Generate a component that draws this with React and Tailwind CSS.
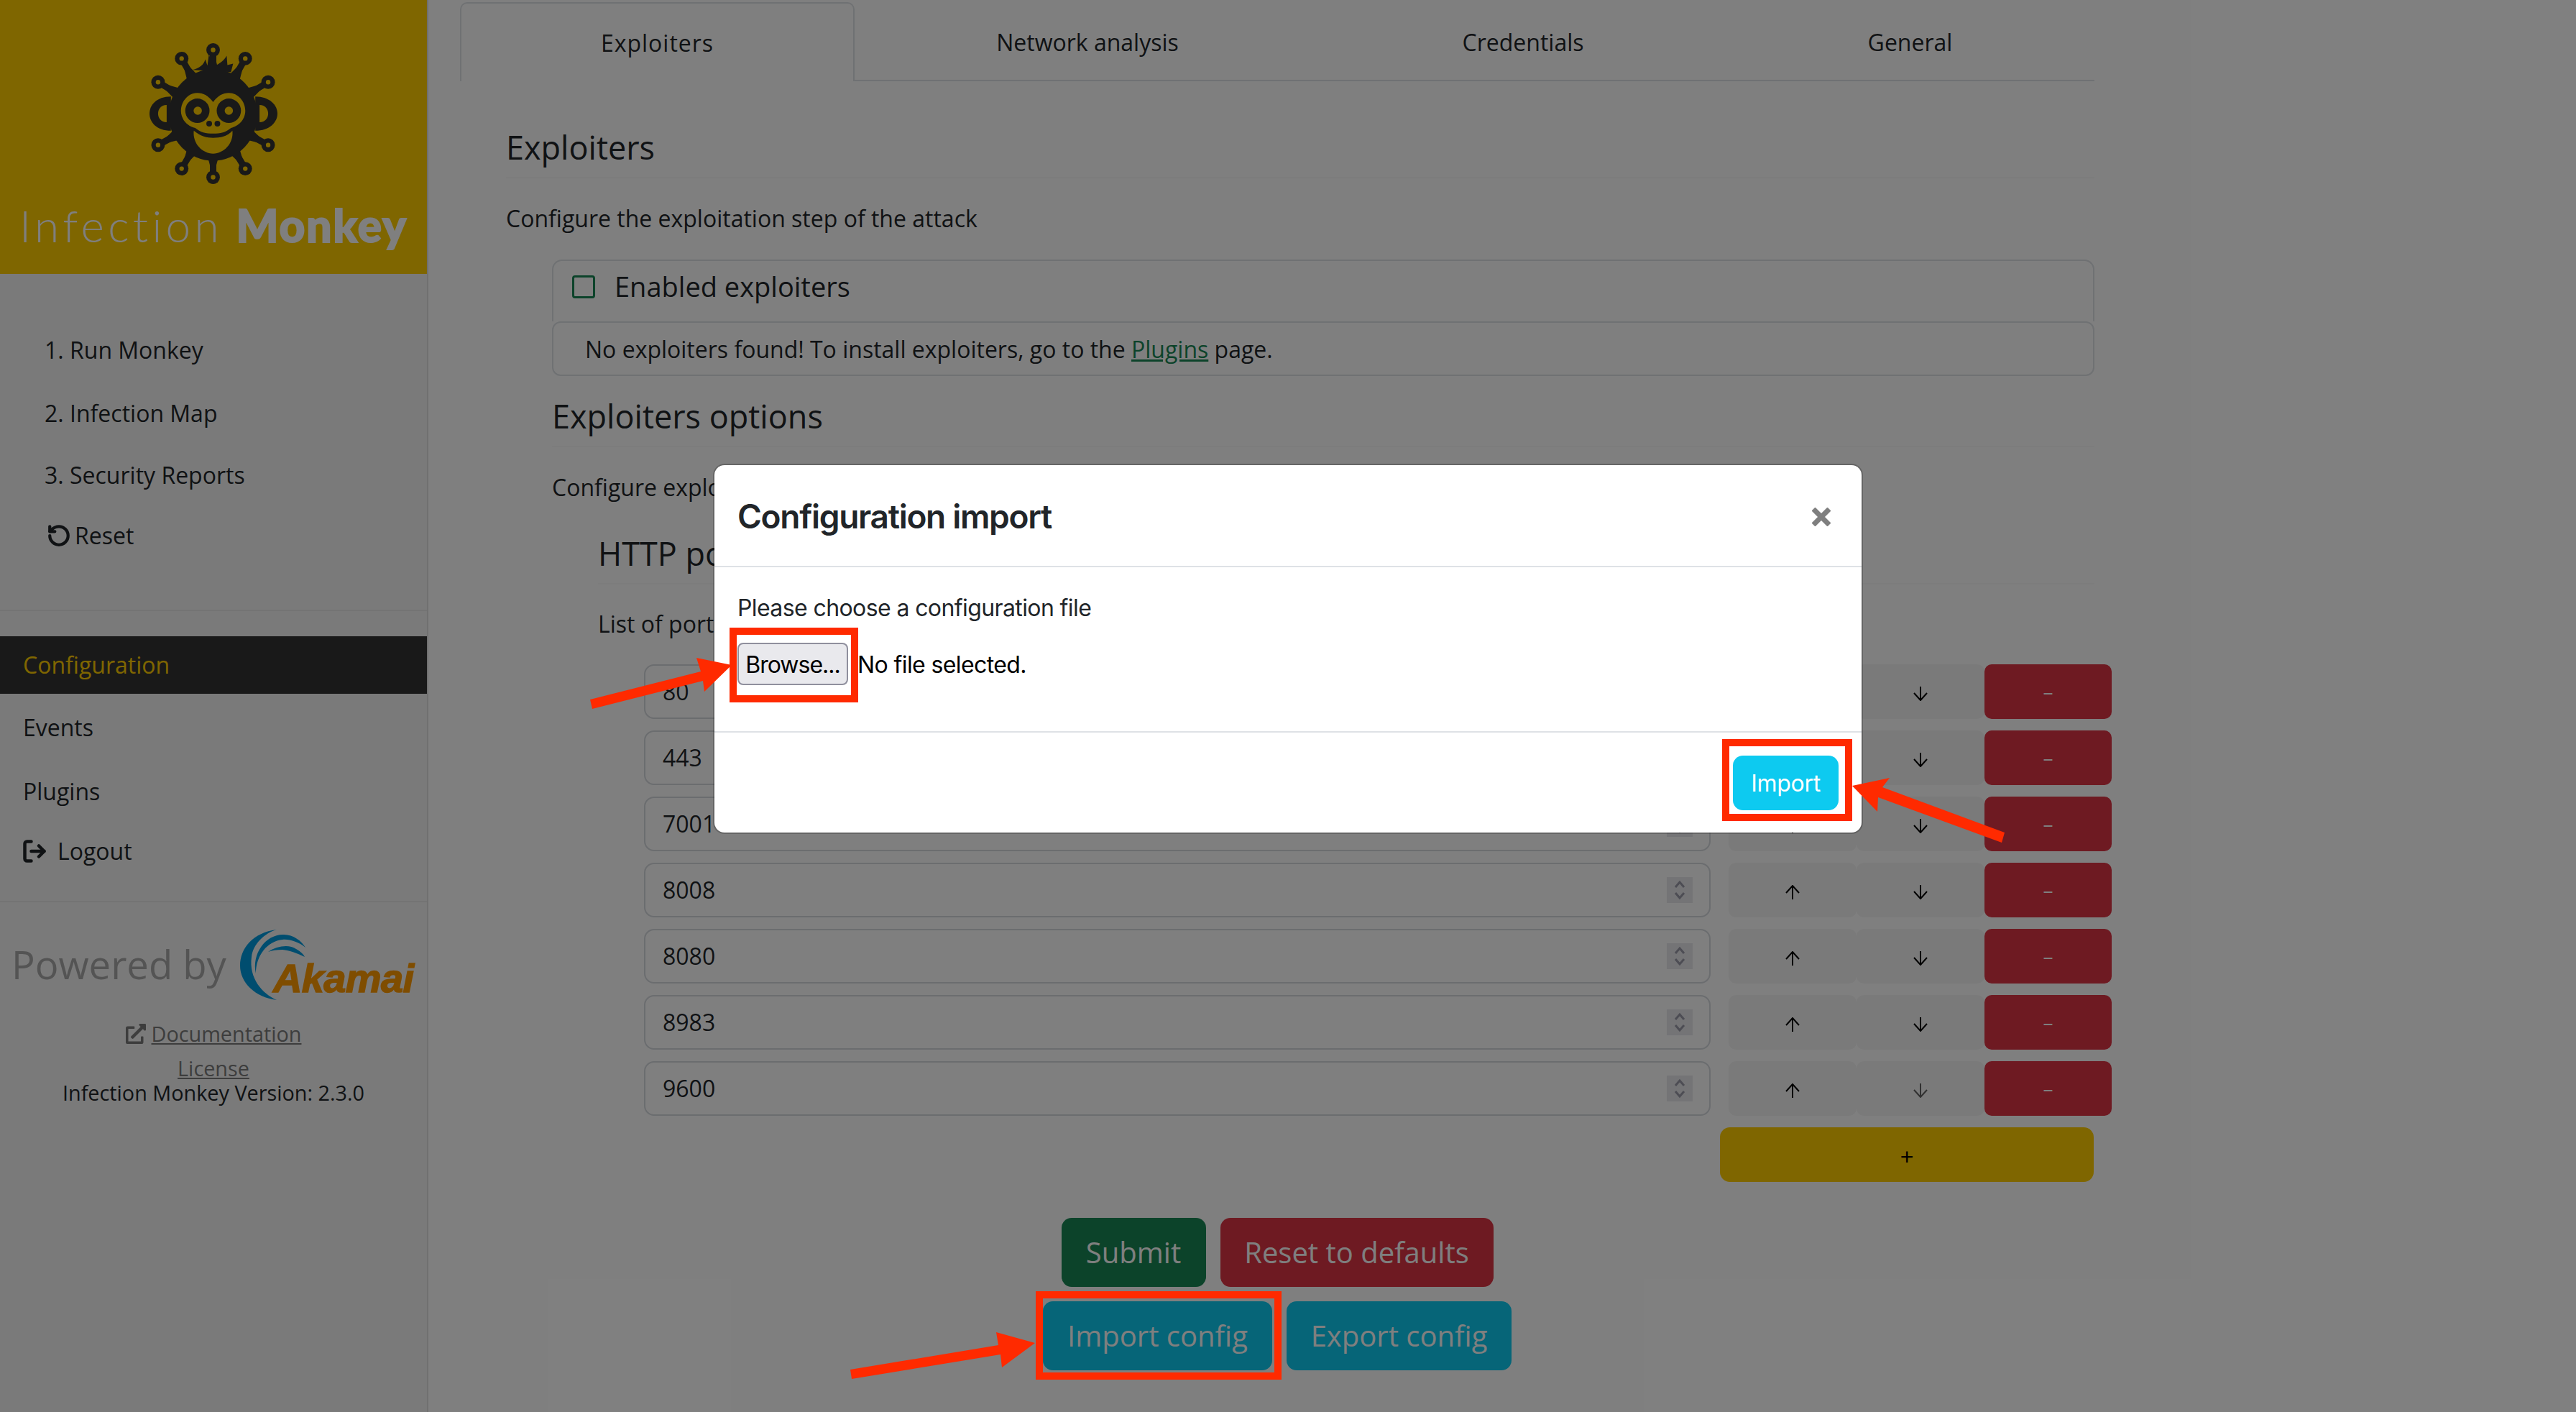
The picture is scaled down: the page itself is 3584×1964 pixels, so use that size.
import React from "react";
import { RotateCcw, LogOut } from "lucide-react";
import { FaExternalLinkAlt } from "react-icons/fa";

const ink = "#333333";

function MonkeyLogo() {
  const balls = [[297,69],[253,81],[342,81],[220,114],[374,114],[220,202],[374,202],[253,235],[342,235],[297,247]];
  return (
    <svg className="w-[180px] h-[198px]" viewBox="207 59 181 198">
      {balls.map(([x, y], i) => (
        <g key={i}>
          <path d={`M${x} ${y} L${297 + (x - 297) * 0.3} ${160 + (y - 160) * 0.3}`} stroke={ink} strokeWidth="9" fill="none" />
          <path d={`M${x} ${y} L${297 + (x - 297) * 0.55 + (y - 160) * 0.12} ${160 + (y - 160) * 0.55 - (x - 297) * 0.12} L${297 + (x - 297) * 0.55 - (y - 160) * 0.12} ${160 + (y - 160) * 0.55 + (x - 297) * 0.12} Z`} fill={ink} />
          <circle cx={x} cy={y} r="9.5" fill={ink} />
          <circle cx={x} cy={y} r="3.2" fill="#ffcc00" />
        </g>
      ))}
      <path d="M238 134 C218 134 208 146 208 158 C208 170 218 182 238 182 Z" fill={ink} />
      <path d="M356 134 C376 134 387 146 387 158 C387 170 376 182 356 182 Z" fill={ink} />
      <path d="M232 146 C224 146 220 152 220 158 C220 164 224 170 232 170 Z" fill="#ffcc00" />
      <path d="M362 146 C370 146 374 152 374 158 C374 164 370 170 362 170 Z" fill="#ffcc00" />
      <ellipse cx="297" cy="160" rx="62" ry="64" fill={ink} />
      <path d="M268 97 C278 94 284 90 286 82 L289 91 L291 76 L300 91 C306 88 312 84 316 77 L317 90 L325 88 L322 100 Z" fill={ink} />
      <path d="M297 142 C291 133 283 129 275 129 C262 129 252 141 252 154 C252 167 262 176 272 178 C279 184 287 186 297 186 C307 186 315 184 322 178 C332 176 342 167 342 154 C342 141 332 129 319 129 C311 129 303 133 297 142 Z" fill="#ffcc00" />
      <circle cx="275" cy="154" r="17" fill={ink} />
      <circle cx="319" cy="154" r="17" fill={ink} />
      <circle cx="275.500" cy="154" r="5.800" fill="#ffcc00" />
      <circle cx="319" cy="154" r="5.800" fill="#ffcc00" />
      <circle cx="291.500" cy="172" r="4" fill={ink} />
      <circle cx="303" cy="172" r="4" fill={ink} />
      <path d="M272 181 C280 188 288 191 297 191 C307 191 316 188 324 181" stroke={ink} strokeWidth="3" fill="none" />
      <path d="M270 182 C280 190 288 192 297 192 C307 192 317 190 324 182 C326 200 312 214 297 214 C282 214 268 200 270 182 Z" fill="#ffcc00" />
    </svg>
  );
}

function AkamaiLogo() {
  return (
    <svg className="w-[242px] h-[98px] shrink-0 overflow-visible" viewBox="334 1292 242 98">
      <path d="M385 1292 C352 1296 334 1318 334 1342 C334 1366 355 1386 385 1390 C365 1381 346 1360 350 1330 C352 1312 368 1297 385 1292 Z" fill="#009bde" />
      <path d="M356 1353 C350 1325 370 1298 395 1299 C408 1299 420 1308 425 1317 C415 1309 403 1305 393 1306 C372 1308 356 1328 356 1353 Z" fill="#009bde" />
      <path d="M373 1323 C385 1315 402 1312 412 1319 C418 1322 422 1326 424 1330 C414 1325 403 1321 393 1320 C385 1320 378 1321 373 1323 Z" fill="#009bde" />
      <text x="380" y="1379" fontFamily="Liberation Sans" fontWeight="700" fontStyle="italic" fontSize="56" fill="#ff9a00" stroke="#ff9a00" strokeWidth="1.5" textLength="196">Akamai</text>
    </svg>
  );
}

function Arrow({ dir, dim }) {
  return (
    <svg className={dim ? "w-[20px] h-[20px] opacity-60" : "w-[20px] h-[20px]"} viewBox="0 0 20 20" fill="none" stroke="#000" strokeWidth="2">
      {dir === "up" ? <path d="M10 20V1M1 11 10 1l9 10" /> : <path d="M10 0v19M1 9l9 10 9-10" />}
    </svg>
  );
}

function PortRow({ port, last }) {
  return (
    <div className="flex h-[76px]">
      <div className="w-[1484px] rounded-[14px] border-2 border-[#d6dadf] bg-white flex items-center pl-[24px] pr-[23px] justify-between text-[32px] text-[#212529]">
        <span>{port}</span>
        <span className="w-[36px] h-[36px] bg-[#e9e9ed] flex items-center justify-center">
          <svg className="w-[18px] h-[30px]" viewBox="0 0 18 30" fill="none" stroke="#9a9aa8" strokeWidth="3">
            <path d="M3 11 9 4l6 7M3 19l6 7 6-7" />
          </svg>
        </span>
      </div>
      <div className="ml-[25px] w-[178px] rounded-[10px] bg-[#f5f5f5] flex items-center justify-center pt-[6px]"><Arrow dir="up" /></div>
      <div className="w-[178px] rounded-[10px] bg-[#f5f5f5] flex items-center justify-center pt-[6px]"><Arrow dir="down" dim={last} /></div>
      <div className="w-[177px] rounded-[10px] bg-[#dc3545] flex items-center justify-center text-white text-[28px] pb-[2px]">–</div>
    </div>
  );
}

const navLink = "flex items-center text-[32px] text-[#212529]";

function Sidebar() {
  return (
    <aside className="w-[596px] shrink-0 h-full bg-[#f5f5f5] border-r-2 border-[#e0e0e0]">
      <div className="h-[381px] bg-[#ffcc00] flex flex-col items-center pt-[59px]">
        <MonkeyLogo />
        <div className="mt-[25px] flex items-baseline leading-[62px] text-white text-[62px] w-[540px]">
          <span className="font-['Lato'] font-light tracking-[5.400px] w-[303px] whitespace-nowrap">Infection</span>
          <span className="font-['Lato'] font-black tracking-[2px] whitespace-nowrap [-webkit-text-stroke:2px_white]">Monkey</span>
        </div>
      </div>
      <nav className="pt-[62px] pl-[62px] border-b-2 border-[#e8e8e8] pb-[62px]">
        <div className={navLink + " h-[88px]"}>1. Run Monkey</div>
        <div className={navLink + " h-[87px]"}>2. Infection Map</div>
        <div className={navLink + " h-[85px]"}>3. Security Reports</div>
        <div className={navLink + " h-[83px]"}>
          <RotateCcw className="w-[34px] h-[34px] mr-[5px] ml-[3px]" strokeWidth={3} />Reset
        </div>
      </nav>
      <div className="pt-[35px] border-b-2 border-[#e8e8e8] pb-[28px] pl-0">
        <div className="h-[80px] bg-[#333333] text-[#ffcc00] flex items-center pl-[32px] text-[32px]">Configuration</div>
        <div className={navLink + " h-[94px] pl-[32px]"}>Events</div>
        <div className={navLink + " h-[84px] pl-[32px]"}>Plugins</div>
        <div className={navLink + " h-[82px] pl-[30px]"}>
          <LogOut className="w-[36px] h-[36px] mr-[14px] -scale-x-100 rotate-180" strokeWidth={3} />Logout
        </div>
      </div>
      <div className="flex items-center mt-[38px] h-[98px] pl-[16px]">
        <span className="w-[318px] text-[54.400px] text-[#a9a9a9] whitespace-nowrap">Powered by</span>
        <AkamaiLogo />
      </div>
      <div className="mt-[23px] h-[48px] flex items-center justify-center text-[28.800px] text-[#7a7a7a] underline">
        <FaExternalLinkAlt className="w-[28px] h-[28px] mr-[8px]" />Documentation
      </div>
      <div className="mt-[4px] h-[40px] flex items-center justify-center text-[28.800px] text-[#7a7a7a] underline">License</div>
      <div className="h-[28px] leading-[28px] text-center text-[28.800px] text-[#212529]">Infection Monkey Version: 2.3.0</div>
    </aside>
  );
}

function Tab({ w, active, children }) {
  return (
    <div
      className={
        active
          ? "h-[110px] flex items-center justify-center text-[32px] tracking-[1px] pt-[2px] text-[#212529] border-2 border-b-0 border-[#dee2e6] rounded-t-[10px]"
          : "h-[110px] flex items-center justify-center text-[32px] pt-[4px] text-[#212529] border-b-2 border-[#dee2e6]"
      }
      style={{ width: w }}
    >
      {children}
    </div>
  );
}

function Main() {
  return (
    <main className="flex-1 bg-white pl-[44px] overflow-hidden">
      <div className="flex pt-[3px] w-[2274px]">
        <Tab w={549} active>Exploiters</Tab>
        <Tab w={648}>Network analysis</Tab>
        <Tab w={564}>Credentials</Tab>
        <Tab w={513}>General</Tab>
      </div>
      <div className="pl-[64px] w-[2274px] text-[#212529]">
        <div className="mt-[51px] h-[84px] flex items-center border-b-2 border-[#f8f8f8] text-[45px]">Exploiters</div>
        <p className="mt-[32px] h-[48px] flex items-center text-[32px]">Configure the exploitation step of the attack</p>
        <div className="ml-[64px] mt-[33px]">
          <div className="h-[86px] border-2 border-b-0 border-[#dee2e6] rounded-t-[14px] flex items-start pl-[26px] pt-[7px] text-[38px]">
            <span className="mt-[13px] w-[32px] h-[32px] rounded-[4px] border-[3px] border-[#198754] mr-[27px]"></span>
            <span>Enabled exploiters</span>
          </div>
          <div className="h-[76px] pt-[2px] border-2 border-[#dee2e6] rounded-[12px] flex items-center pl-[44px] text-[32px]">
            <span>No exploiters found! To install exploiters, go to the <a className="text-[#198754] underline">Plugins</a> page.</span>
          </div>
          <div className="mt-[15px] h-[84px] flex items-center border-b-2 border-[#f8f8f8] text-[45px]">Exploiters options</div>
          <p className="mt-[31px] h-[48px] pt-[2px] flex items-center text-[32px]">Configure exploiters options</p>
          <div className="ml-[64px]">
            <div className="mt-[27px] h-[85px] flex items-center border-b-2 border-[#f8f8f8] text-[45px]">HTTP ports</div>
            <p className="mt-[31px] h-[48px] flex items-center text-[32px]">List of ports</p>
            <div className="mt-[32px] ml-[64px] w-[2042px] flex flex-col gap-[16px]">
              {[80, 443, 7001, 8008, 8080, 8983].map((p) => <PortRow key={p} port={p} />)}
              <PortRow port={9600} last />
            </div>
            <div className="mt-[16px] ml-[1561px] w-[520px] h-[76px] rounded-[14px] bg-[#ffcc00] flex items-center justify-center text-[#000] text-[32px] pt-[6px] font-['Liberation_Sans']">+</div>
          </div>
        </div>
        <div className="mt-[50px] w-[2146px] flex flex-col gap-[20px] text-[40px] text-white">
          <div className="flex justify-center gap-[20px]">
            <div className="h-[96px] w-[201px] rounded-[14px] bg-[#198754] flex items-center justify-center">Submit</div>
            <div className="h-[96px] w-[380px] rounded-[14px] bg-[#dc3545] flex items-center justify-center">Reset to defaults</div>
          </div>
          <div className="flex justify-center gap-[20px]">
            <div className="h-[96px] w-[319px] rounded-[14px] bg-[#0dcaf0] flex items-center justify-center">Import config</div>
            <div className="h-[96px] w-[313px] rounded-[14px] bg-[#0dcaf0] flex items-center justify-center">Export config</div>
          </div>
        </div>
      </div>
    </main>
  );
}

function Modal() {
  return (
    <div className="absolute inset-0 bg-black/50 flex justify-center items-start pt-[647px] font-['Inter']">
      <div className="w-[1596px] h-[511px] bg-white rounded-[14px] shadow-[0_0_0_2px_rgba(0,0,0,0.2)] flex flex-col text-[#212529]">
        <div className="h-[142px] shrink-0 border-b-2 border-[#dee2e6] flex items-center justify-between pl-[32px] pr-[43px]">
          <span className="text-[46px] font-semibold tracking-[-1.300px] pt-[2px]">Configuration import</span>
          <svg className="w-[26px] h-[26px] mt-[4px]" viewBox="0 0 26 26" stroke="#7f7f7f" strokeWidth="7"><path d="M2 2l22 22M24 2 2 24" /></svg>
        </div>
        <div className="h-[228px] shrink-0 pl-[32px] pt-[33px] text-[32px] tracking-[-0.600px]">
          <div className="h-[48px] flex items-center">Please choose a configuration file</div>
          <div className="mt-[24px] flex items-center h-[59px]">
            <div className="w-[154px] h-[59px] rounded-[8px] border-2 border-[#8f8f9d] bg-[#e9e9ed] text-[#000] flex items-center justify-center tracking-[-1px] pt-[2px]">Browse...</div>
            <span className="ml-[13px] text-[#000] pt-[2px]">No file selected.</span>
          </div>
        </div>
        <div className="flex-1 border-t-2 border-[#dee2e6] flex justify-end pr-[32px] pt-[32px]">
          <div className="w-[147px] h-[76px] rounded-[14px] bg-[#0dcaf0] text-white text-[32px] tracking-[-0.300px] pt-[2px] flex items-center justify-center">Import</div>
        </div>
      </div>
    </div>
  );
}

function Annotations() {
  const red = "#ff2a00";
  return (
    <svg className="absolute inset-0 w-[3584px] h-[1964px] pointer-events-none" viewBox="0 0 3584 1964">
      <g fill="none" stroke={red} strokeWidth="10">
        <rect x="1020" y="878" width="169" height="94" />
        <rect x="2401" y="1033" width="171" height="104" />
        <rect x="1446" y="1801" width="332" height="113" />
      </g>
      <g fill={red}>
        <path d="M821 973 L975 934 L969 915 L1018 925 L980 962 L978 947 L824 986 Z" />
        <path d="M2789 1158 L2619 1095 L2629 1082 L2577 1093 L2612 1129 L2613 1109 L2785 1172 Z" />
        <path d="M1183 1905 L1389 1871 L1386 1853 L1440 1868 L1394 1902 L1392 1884 L1185 1918 Z" />
      </g>
    </svg>
  );
}

export default function App() {
  return (
    <div className="relative w-[3584px] h-[1964px] overflow-hidden flex font-['Open_Sans',sans-serif] bg-white">
      <Sidebar />
      <Main />
      <Modal />
      <Annotations />
    </div>
  );
}
